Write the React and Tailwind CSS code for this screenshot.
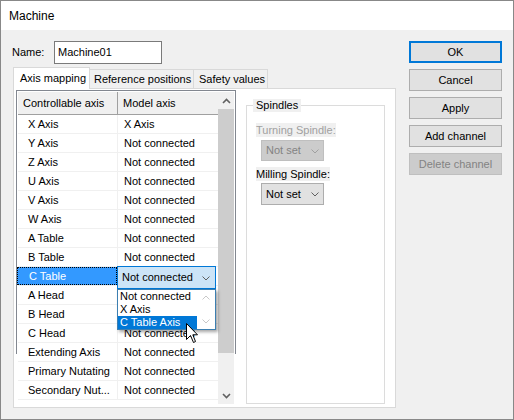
import React from "react";

const rows = [
  ["X Axis", "X Axis"],
  ["Y Axis", "Not connected"],
  ["Z Axis", "Not connected"],
  ["U Axis", "Not connected"],
  ["V Axis", "Not connected"],
  ["W Axis", "Not connected"],
  ["A Table", "Not connected"],
  ["B Table", "Not connected"],
  ["C Table", "Not connected"],
  ["A Head", "Not connected"],
  ["B Head", "Not connected"],
  ["C Head", "Not connected"],
  ["Extending Axis", "Not connected"],
  ["Primary Nutating", "Not connected"],
  ["Secondary Nut...", "Not connected"],
];

function ChevronDown({ color = "#606060", className = "" }) {
  return (
    <svg width="8" height="5" viewBox="0 0 8 5" className={className}>
      <path d="M0.5 0.5 L4 4 L7.5 0.5" fill="none" stroke={color} strokeWidth="1" />
    </svg>
  );
}

function ChevronUp({ color = "#606060", className = "" }) {
  return (
    <svg width="8" height="5" viewBox="0 0 8 5" className={className}>
      <path d="M0.5 4.5 L4 1 L7.5 4.5" fill="none" stroke={color} strokeWidth="1" />
    </svg>
  );
}

function BoldChevron({ up }) {
  return (
    <svg width="9" height="6" viewBox="0 0 9 6">
      <path
        d={up ? "M1 5 L4.5 1.5 L8 5" : "M1 1 L4.5 4.5 L8 1"}
        fill="none"
        stroke="#606060"
        strokeWidth="1.6"
      />
    </svg>
  );
}

function Cursor() {
  return (
    <svg width="13" height="21" viewBox="0 0 13 21">
      <path
        d="M0.5 0.5 L0.5 16.5 L4.5 12.5 L7.5 19.5 L9.5 18.5 L6.8 11.8 L11.5 11.8 Z"
        fill="white"
        stroke="black"
        strokeWidth="1"
        strokeLinejoin="miter"
      />
    </svg>
  );
}

function Button({ children, primary, disabled }) {
  let cls =
    "h-[22px] w-[93px] flex items-center justify-center bg-[#e1e1e1] border border-[#adadad] text-black";
  if (primary) cls = "h-[22px] w-[93px] flex items-center justify-center bg-[#e1e1e1] border-2 border-[#0078d7] text-black";
  if (disabled) cls = "h-[22px] w-[93px] flex items-center justify-center bg-[#cccccc] border border-[#bfbfbf] text-[#838383]";
  return <div className={cls}>{children}</div>;
}

export default function App() {
  return (
    <div className="w-[514px] h-[420px] flex flex-col border border-[#888888] bg-[#f0f0f0] text-[11px] text-black font-['Liberation_Sans',Arial,sans-serif] leading-none overflow-hidden">
      <div className="h-[29px] bg-white flex items-center pl-[8px] text-[12px] pt-[1px]">Machine</div>
      <div className="flex-1 flex">
        {/* left column */}
        <div className="w-[395px] pl-[11px] pt-[11px] flex flex-col">
          <div className="flex items-center h-[23px]">
            <div className="w-[42px]">Name:</div>
            <div className="w-[108px] h-[23px] border border-[#7a7a7a] bg-white flex items-center pl-[3px]">
              Machine01
            </div>
          </div>
          {/* tabs */}
          <div className="mt-[3px] ml-[1px] flex items-end h-[22px] -mb-px relative z-10">
            <div className="w-[77px] h-[22px] bg-white border-l border-t border-r border-[#d9d9d9] pl-[6px] flex items-center pb-[1px]">
              Axis mapping
            </div>
            <div className="w-[104px] h-[20px] bg-[#f0f0f0] border-t border-r border-b border-[#d9d9d9] pl-[4px] flex items-center whitespace-nowrap overflow-hidden">
              Reference positions
            </div>
            <div className="w-[74px] h-[20px] bg-[#f0f0f0] border-t border-r border-b border-[#d9d9d9] pl-[5px] flex items-center whitespace-nowrap overflow-hidden">
              Safety values
            </div>
          </div>
          {/* panel */}
          <div className="ml-[1px] w-[383px] h-[320px] bg-white border border-[#d9d9d9] flex items-start pl-[2px] pt-[1px]">
            {/* grid */}
            <div className="relative w-[220px] h-[314px] pt-[1px] px-[1px] flex border-l border-r border-t border-[#828790]">
              <div className="w-[200px] flex flex-col">
                <div className="flex h-[23px] bg-[#f0f0f0] border-b border-[#a0a0a0]">
                  <div className="w-[100px] border-r border-[#a0a0a0] pl-[5px] flex items-center">Controllable axis</div>
                  <div className="w-[100px] pl-[5px] flex items-center">Model axis</div>
                </div>
                {rows.map(([a, b], i) => {
                  const sel = a === "C Table";
                  const hidden = a === "A Head" || a === "B Head";
                  return (
                    <div key={i} className="flex h-[19px] border-b border-[#f0f0f0]">
                      {sel ? (
                        <div className="w-[100px] -ml-px bg-[#3399ff] text-white border border-dotted border-black pl-[11px] flex items-center whitespace-nowrap">
                          {a}
                        </div>
                      ) : (
                        <div className="w-[100px] border-r border-[#f0f0f0] pl-[10px] flex items-center whitespace-nowrap">
                          {a}
                        </div>
                      )}
                      <div className="relative w-[100px] pl-[6px] flex items-center whitespace-nowrap">
                        {hidden || sel ? <span className="invisible">{b}</span> : b}
                        {sel && (
                          <>
                            <div className="absolute -top-[1px] left-0 w-[99px] h-[23px] bg-[#cce4f7] border border-[#0078d7] z-20 flex items-center pl-[4px]">
                              Not connected
                              <ChevronDown className="absolute right-[5px] top-[9px]" />
                            </div>
                            <div className="absolute top-[22px] left-0 w-[99px] h-[41px] bg-white border border-[#3c7fb1] z-20 shadow-[2px_2px_3px_rgba(0,0,0,0.35)] flex">
                              <div className="w-[79px] flex flex-col">
                                <div className="h-[13px] flex items-center pl-[2px]">Not connected</div>
                                <div className="h-[13px] flex items-center pl-[2px]">X Axis</div>
                                <div className="h-[13px] flex items-center pl-[2px] bg-[#0078d7] text-white">C Table Axis</div>
                              </div>
                              <div className="flex-1 flex flex-col items-center justify-between py-[5px]">
                                <ChevronUp color="#c8c8c8" />
                                <ChevronDown color="#c8c8c8" />
                              </div>
                              <div className="absolute left-[68px] top-[33px] z-30">
                                <Cursor />
                              </div>
                            </div>
                          </>
                        )}
                      </div>
                    </div>
                  );
                })}
              </div>
              {/* scrollbar */}
              <div className="w-[17px] bg-[#f0f0f0] flex flex-col">
                <div className="h-[17px] flex items-center justify-center">
                  <BoldChevron up />
                </div>
                <div className="h-[244px] bg-[#cdcdcd]" />
                <div className="flex-1" />
                <div className="h-[17px] flex items-center justify-center">
                  <BoldChevron />
                </div>
              </div>
              <div className="absolute top-[263px] -left-px w-[1px] h-[51px] bg-white" />
              <div className="absolute top-[263px] -right-px w-[1px] h-[51px] bg-white" />
            </div>
            {/* group box */}
            <div className="relative ml-[10px] mt-[15px] w-[139px] h-[299px] border border-[#dcdcdc] pl-[9px] pt-[17px]">
              <div className="absolute -top-[7px] left-[6px] h-[13px] bg-[#f0f0f0] px-[3px] flex items-center">Spindles</div>
              <div className="h-[14px] bg-[#f0f0f0] w-fit flex items-center text-[#a0a0a0]">Turning Spindle:</div>
              <div className="relative mt-[3px] ml-[5px] w-[63px] h-[21px] bg-[#cccccc] border border-[#bfbfbf] text-[#838383] flex items-center pl-[4px]">
                Not set
                <ChevronDown color="#a0a0a0" className="absolute right-[4px] top-[8px]" />
              </div>
              <div className="mt-[6px] h-[14px] bg-[#f0f0f0] w-fit flex items-center">Milling Spindle:</div>
              <div className="relative mt-[2px] ml-[5px] w-[63px] h-[22px] bg-[#e1e1e1] border border-[#adadad] flex items-center pl-[4px]">
                Not set
                <ChevronDown className="absolute right-[4px] top-[8px]" />
              </div>
            </div>
          </div>
        </div>
        {/* buttons */}
        <div className="ml-[13px] pt-[11px] flex flex-col gap-[6px]">
          <Button primary>OK</Button>
          <Button>Cancel</Button>
          <Button>Apply</Button>
          <Button>Add channel</Button>
          <Button disabled>Delete channel</Button>
        </div>
      </div>
    </div>
  );
}
